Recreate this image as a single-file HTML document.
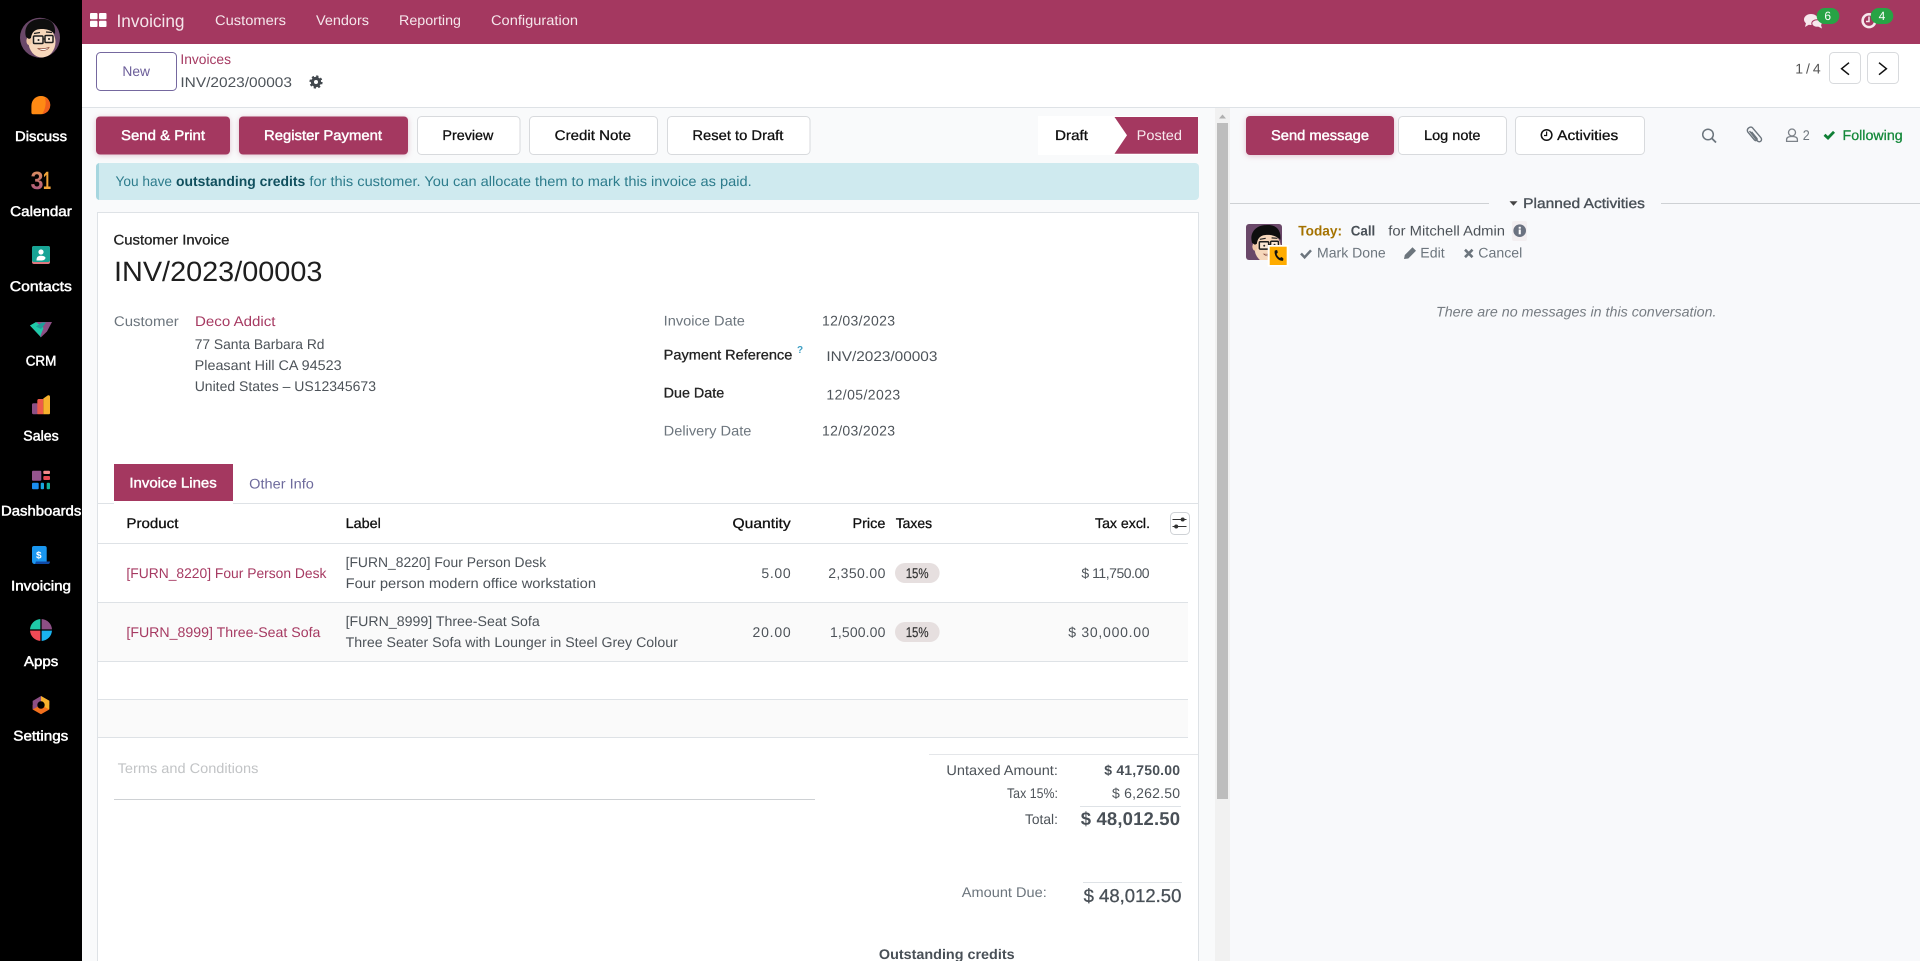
<!DOCTYPE html>
<html lang="en">
<head>
<meta charset="utf-8">
<title>INV/2023/00003 - Invoicing</title>
<style>
html,body{margin:0;padding:0;width:1920px;height:961px;overflow:hidden;background:#f9fafb}
svg{display:block;position:absolute;left:0;top:0}
text{font-family:"Liberation Sans",sans-serif;font-size:14px;text-rendering:geometricPrecision;white-space:pre}
.w{fill:#fff}
.wm{fill:#fff;stroke:#fff;stroke-width:.45}
.d{fill:#111}
.dm{fill:#111;stroke:#111;stroke-width:.3}
.g{fill:#4d5359}
.gl{fill:#6c757d}
.p{fill:#a63a62}
.sb{fill:#fff;stroke:#fff;stroke-width:.5}
.btn{fill:#fff;stroke:#d8dadd;stroke-width:1}
.pb{fill:#a43860;filter:drop-shadow(0 1px 3px rgba(164,56,96,.28))}
.ln{fill:#dee2e6}
</style>
</head>
<body>
<svg width="1920" height="961" viewBox="0 0 1920 961" xmlns="http://www.w3.org/2000/svg">
<defs>
<clipPath id="ac"><circle cx="40" cy="37.7" r="20"/></clipPath>
<clipPath id="as"><rect x="1246" y="224" width="36" height="36" rx="3"/></clipPath>
<linearGradient id="cal" x1="0" y1="0" x2="0" y2="1"><stop offset="0" stop-color="#e79a5a"/><stop offset="1" stop-color="#a04a86"/></linearGradient>
<g id="face">
<rect x="18" y="16" width="44" height="44" fill="#6a4869"/>
<ellipse cx="42" cy="42" rx="13.5" ry="15.5" fill="#f6d7bb"/>
<ellipse cx="29" cy="41" rx="2.6" ry="4" fill="#f0c9a8"/>
<path d="M26 37C23 26 31 19 40 19C50 18 56 23 55 34C51 30 46 29 42 29C36 29 32 31 31 38L29 39Z" fill="#0e0e0e"/>
<path d="M34 33.500l6-1M46 32l6 .5" stroke="#222" stroke-width="1.200" fill="none"/>
<rect x="33.500" y="36" width="9.500" height="7.500" rx="1" fill="#fff" fill-opacity=".35" stroke="#1c1c1c" stroke-width="1.500"/>
<rect x="45" y="35.500" width="8" height="7" rx="1" fill="#fff" fill-opacity=".35" stroke="#1c1c1c" stroke-width="1.500"/>
<path d="M43 39h2" stroke="#1c1c1c" stroke-width="1.300"/>
<circle cx="38.500" cy="40" r="1" fill="#222"/><circle cx="49" cy="39" r="1" fill="#222"/>
<path d="M38 48.500C41 51.500 47 51 49 47.500C46 48.500 42 49 38 48.500Z" fill="#fff" stroke="#8a4a3a" stroke-width=".7"/>
</g>
</defs>

<!-- sidebar -->
<rect x="0" y="0" width="82" height="961" fill="#000"/>
<g clip-path="url(#ac)"><use href="#face"/></g>

<path d="M31.400 106C31.400 100 35.500 96 41 96C46.500 96 50.200 100 50.200 105C50.200 110.500 46 114 41 114.300L33 114.300C31.900 114.300 31.400 113.500 31.400 112.500Z" fill="#ff8a14"/>
<path d="M45 97.500C48.500 99 50.200 102 50.200 105C50.200 110 46.500 113.500 42 114.200C45.500 109 46.500 103 45 97.500Z" fill="#f0601c"/>
<text x="15" y="141" class="sb" textLength="52" lengthAdjust="spacingAndGlyphs">Discuss</text>

<text x="30.500" y="189" style="font-size:25px;font-weight:700" fill="url(#cal)" textLength="13" lengthAdjust="spacingAndGlyphs">3</text>
<text x="43" y="189" style="font-size:25px;font-weight:700" fill="#f2a53a" textLength="8" lengthAdjust="spacingAndGlyphs">1</text>
<text x="10.200" y="216" class="sb" textLength="61.600" lengthAdjust="spacingAndGlyphs">Calendar</text>

<rect x="32" y="246" width="18" height="18" rx="2" fill="#e0787f"/>
<rect x="32" y="246" width="18" height="16" rx="2" fill="#17a495"/>
<circle cx="41" cy="252" r="2.600" fill="#fff"/>
<path d="M36.500 260.500C36.500 257 38 255.800 41 255.800C44 255.800 45.500 257 45.500 258C45 260 43 260.500 41 260.500Z" fill="#fff"/>
<text x="9.800" y="291" class="sb" textLength="62" lengthAdjust="spacingAndGlyphs">Contacts</text>

<path d="M30 325.500L37 322H52L47 331.500L41 337.300Z" fill="#8d4f85"/>
<path d="M30 325.500L36 322L43.500 328L40 337L41 337.300Z" fill="#1fc9a8"/>
<path d="M36 326.500L42 322.500H46L41 329Z" fill="#1e9f9a"/>
<text x="25.700" y="365.700" class="sb" textLength="30.600" lengthAdjust="spacingAndGlyphs">CRM</text>

<rect x="32" y="403.300" width="6" height="11" rx="1.500" fill="#8d4f85"/>
<path d="M37.300 414.300V400.500Q37.300 399.300 38.500 399H43.300V414.300Z" fill="#ee5a4a"/>
<path d="M43.300 414.300V398.500L48 395.300Q50 395 50 397V413Q50 414.300 48.500 414.300Z" fill="#f7b12d"/>
<text x="23.300" y="440.700" class="sb" textLength="35.400" lengthAdjust="spacingAndGlyphs">Sales</text>

<rect x="32" y="470.700" width="9.300" height="10" rx="1" fill="#95558f"/>
<rect x="43.300" y="470.700" width="6.700" height="3.300" rx="1" fill="#f58a8a"/>
<rect x="43.300" y="476" width="6.700" height="4" rx="1" fill="#e84a52"/>
<rect x="32" y="482.700" width="6.700" height="6.600" rx="1" fill="#1a8cf0"/>
<rect x="40.700" y="482.700" width="3.300" height="6.600" rx="1" fill="#17a7e0"/>
<rect x="46.700" y="482.700" width="3.300" height="6.600" rx="1" fill="#12b39a"/>
<text x="1" y="515.700" class="sb" textLength="80.300" lengthAdjust="spacingAndGlyphs">Dashboards</text>

<path d="M34 546H44.500Q46.700 546 46.700 548V564H35Q32 564 32 561V548Q32 546 34 546Z" fill="#1a97f0"/>
<path d="M36 561.500H50Q50 564 48 564H35Z" fill="#0f4aa8"/>
<text x="36" y="558.500" style="font-size:10px;font-weight:700" fill="#fff">$</text>
<text x="11" y="590.700" class="sb" textLength="60" lengthAdjust="spacingAndGlyphs">Invoicing</text>

<path d="M41 630V619A11 11 0 0 0 30 630Z" fill="#1fc9a8"/>
<path d="M41 630V619A11 11 0 0 1 52 630Z" fill="#8d4f85"/>
<path d="M41 630H30A11 11 0 0 0 41 641Z" fill="#f04a55"/>
<path d="M41 630H52A11 11 0 0 1 41 641Z" fill="#1ab3f0"/>
<path d="M41 618.500V641.500M29.500 630H52.500" stroke="#000" stroke-width="1.300"/>
<text x="24" y="666" class="sb" textLength="34.300" lengthAdjust="spacingAndGlyphs">Apps</text>

<path d="M41 696L49.300 700.700V705H33V700.700Z" fill="#8d4f85"/>
<path d="M41 696L49.300 700.700V709.300L45 711L41 705Z" fill="#f7b12d"/>
<path d="M32.700 709.500L41 714.300L49.300 709.500L41 705L32.700 705Z" fill="#f2701d"/>
<path d="M32.700 700.700V709.500L38 706.500V703Z" fill="#8d4f85"/>
<circle cx="41" cy="705" r="3.700" fill="#000"/>
<text x="13.300" y="740.700" class="sb" textLength="55" lengthAdjust="spacingAndGlyphs">Settings</text>

<!-- navbar -->
<rect x="82" y="0" width="1838" height="44" fill="#a43860"/>
<rect x="90" y="13" width="7.500" height="6.300" rx="1" fill="#fff"/><rect x="99" y="13" width="7.500" height="6.300" rx="1" fill="#fff"/>
<rect x="90" y="20.700" width="7.500" height="6.300" rx="1" fill="#fff"/><rect x="99" y="20.700" width="7.500" height="6.300" rx="1" fill="#fff"/>
<text x="116.500" y="27" style="font-size:18px" fill="#f5e6eb" textLength="68" lengthAdjust="spacingAndGlyphs">Invoicing</text>
<text x="215" y="25" fill="#f5e6eb" textLength="71" lengthAdjust="spacingAndGlyphs">Customers</text>
<text x="316" y="25" fill="#f5e6eb" textLength="53" lengthAdjust="spacingAndGlyphs">Vendors</text>
<text x="399" y="25" fill="#f5e6eb" textLength="62" lengthAdjust="spacingAndGlyphs">Reporting</text>
<text x="491" y="25" fill="#f5e6eb" textLength="87" lengthAdjust="spacingAndGlyphs">Configuration</text>

<ellipse cx="1811" cy="19.500" rx="7" ry="5.500" fill="#f7e8ed"/>
<path d="M1806 23L1805 27L1810 24Z" fill="#f7e8ed"/>
<ellipse cx="1817" cy="23.500" rx="5.200" ry="3.800" fill="#f7e8ed" stroke="#a43860" stroke-width="1"/>
<path d="M1818 26.500L1822 28.500L1821 25Z" fill="#f7e8ed"/>
<rect x="1816.700" y="8" width="22.600" height="16" rx="8" fill="#28a345"/>
<text x="1827.700" y="20" text-anchor="middle" style="font-size:12px" fill="#fff">6</text>
<circle cx="1869" cy="20.700" r="6.400" fill="none" stroke="#f7e8ed" stroke-width="2.500"/>
<path d="M1869 16.500V21.500H1866" fill="none" stroke="#f7e8ed" stroke-width="1.500"/>
<rect x="1870.700" y="8" width="22.600" height="16" rx="8" fill="#28a345"/>
<text x="1882" y="20" text-anchor="middle" style="font-size:12px" fill="#fff">4</text>

<!-- control panel -->
<rect x="82" y="44" width="1838" height="63" fill="#fff"/>
<rect x="82" y="107" width="1838" height="1" fill="#dee2e6"/>
<rect x="96.500" y="52.500" width="80" height="38" rx="4" fill="#fff" stroke="#75689f" stroke-width="1"/>
<text x="122.400" y="76" fill="#6b5d99" textLength="27.600" lengthAdjust="spacingAndGlyphs">New</text>
<text x="180.400" y="64" class="p" textLength="50.600" lengthAdjust="spacingAndGlyphs">Invoices</text>
<text x="180.400" y="87" class="g" textLength="111.600" lengthAdjust="spacingAndGlyphs">INV/2023/00003</text>
<circle cx="316" cy="82" r="3.600" fill="none" stroke="#41474d" stroke-width="3.200"/>
<circle cx="316" cy="82" r="5.600" fill="none" stroke="#41474d" stroke-width="2" stroke-dasharray="2.200 2.200"/>

<text x="1795.300" y="73.300" fill="#555" textLength="25.400" lengthAdjust="spacing">1 / 4</text>
<rect x="1829.500" y="52.500" width="31" height="31" rx="4" class="btn"/>
<rect x="1867.500" y="52.500" width="31" height="31" rx="4" class="btn"/>
<path d="M1849 62.700L1841.600 68.700L1849 74.700" fill="none" stroke="#111" stroke-width="1.500"/>
<path d="M1879 62.700L1886.400 68.700L1879 74.700" fill="none" stroke="#111" stroke-width="1.500"/>

<!-- action buttons -->
<rect x="96" y="116.500" width="134" height="38" rx="4" class="pb"/>
<text x="121" y="140" class="wm" textLength="84" lengthAdjust="spacingAndGlyphs">Send &amp; Print</text>
<rect x="239" y="116.500" width="169" height="38" rx="4" class="pb"/>
<text x="264" y="140" class="wm" textLength="118" lengthAdjust="spacingAndGlyphs">Register Payment</text>
<rect x="417.500" y="116.500" width="102.500" height="38" rx="4" class="btn"/>
<text x="442.400" y="140" class="dm" textLength="51" lengthAdjust="spacingAndGlyphs">Preview</text>
<rect x="529.500" y="116.500" width="128" height="38" rx="4" class="btn"/>
<text x="554.700" y="140" class="dm" textLength="76.300" lengthAdjust="spacingAndGlyphs">Credit Note</text>
<rect x="667.500" y="116.500" width="142.500" height="38" rx="4" class="btn"/>
<text x="692.400" y="140" class="dm" textLength="91" lengthAdjust="spacingAndGlyphs">Reset to Draft</text>

<!-- status bar -->
<rect x="1038" y="116" width="160" height="39" fill="#fff"/>
<path d="M1114.500 117H1198V153.700H1114.500L1127 135.300Z" fill="#a43860"/>
<text x="1055" y="140" class="dm" textLength="33" lengthAdjust="spacingAndGlyphs">Draft</text>
<text x="1136.700" y="140" fill="#f7e8ed" textLength="45.300" lengthAdjust="spacingAndGlyphs">Posted</text>

<!-- alert -->
<rect x="96" y="163" width="1103" height="37" rx="4" fill="#cfeaef"/>
<path d="M100 163H99V200H100C97.500 200 96 198.500 96 196V167C96 164.500 97.500 163 100 163Z" fill="#a6d6df"/>
<text x="115.500" y="186" fill="#2d7c8c" textLength="56.500" lengthAdjust="spacingAndGlyphs">You have</text>
<text x="176" y="186" style="font-weight:700" fill="#11505e" textLength="129.300" lengthAdjust="spacingAndGlyphs">outstanding credits</text>
<text x="309.400" y="186" fill="#2d7c8c" textLength="442.300" lengthAdjust="spacingAndGlyphs">for this customer. You can allocate them to mark this invoice as paid.</text>

<!-- sheet -->
<rect x="97.500" y="212.500" width="1101" height="760" fill="#fff" stroke="#dee2e6"/>
<text x="113.500" y="244.300" fill="#222" stroke="#222" stroke-width=".3" textLength="115.900" lengthAdjust="spacingAndGlyphs">Customer Invoice</text>
<text x="114" y="281" style="font-size:28px" fill="#1e1e1e" textLength="208.400" lengthAdjust="spacingAndGlyphs">INV/2023/00003</text>

<text x="113.900" y="326" class="gl" textLength="64.900" lengthAdjust="spacingAndGlyphs">Customer</text>
<text x="195" y="326" class="p" textLength="80.500" lengthAdjust="spacingAndGlyphs">Deco Addict</text>
<text x="194.700" y="349" class="g" textLength="129.800" lengthAdjust="spacingAndGlyphs">77 Santa Barbara Rd</text>
<text x="194.700" y="370" class="g" textLength="146.900" lengthAdjust="spacingAndGlyphs">Pleasant Hill CA 94523</text>
<text x="194.700" y="391" class="g" textLength="181.300" lengthAdjust="spacingAndGlyphs">United States – US12345673</text>

<text x="663.700" y="325.300" class="gl" textLength="81.200" lengthAdjust="spacingAndGlyphs">Invoice Date</text>
<text x="822" y="325.300" class="g" textLength="73" lengthAdjust="spacing">12/03/2023</text>
<text x="663.700" y="359.300" fill="#222" stroke="#222" stroke-width=".3" textLength="128.600" lengthAdjust="spacingAndGlyphs">Payment Reference</text>
<text x="797" y="353" style="font-size:10px;font-weight:700" fill="#3d9fc4">?</text>
<text x="826.400" y="361" class="g" textLength="111" lengthAdjust="spacingAndGlyphs">INV/2023/00003</text>
<text x="663.700" y="397.300" fill="#222" stroke="#222" stroke-width=".3" textLength="60.500" lengthAdjust="spacingAndGlyphs">Due Date</text>
<text x="826.400" y="399.300" class="g" textLength="73.800" lengthAdjust="spacing">12/05/2023</text>
<text x="663.700" y="435.300" class="gl" textLength="87.700" lengthAdjust="spacingAndGlyphs">Delivery Date</text>
<text x="822" y="435.300" class="g" textLength="73" lengthAdjust="spacing">12/03/2023</text>

<!-- tabs -->
<rect x="98" y="503" width="1100" height="1" class="ln"/>
<rect x="114" y="503" width="119" height="1" fill="#fff"/>
<rect x="114" y="464" width="119" height="37" fill="#a43860"/>
<text x="129.400" y="487.300" class="wm" textLength="87.300" lengthAdjust="spacingAndGlyphs">Invoice Lines</text>
<text x="249.200" y="488.300" fill="#6d6a9c" textLength="64.700" lengthAdjust="spacingAndGlyphs">Other Info</text>

<!-- table -->
<rect x="98" y="602" width="1090" height="59" fill="#fafafa"/>
<rect x="98" y="699" width="1090" height="38" fill="#fafafa"/>
<rect x="98" y="543" width="1090" height="1" class="ln"/>
<rect x="98" y="602" width="1090" height="1" class="ln"/>
<rect x="98" y="661" width="1090" height="1" class="ln"/>
<rect x="98" y="699" width="1090" height="1" class="ln"/>
<rect x="98" y="737" width="1090" height="1" class="ln"/>

<text x="126.400" y="528" class="dm" textLength="52" lengthAdjust="spacingAndGlyphs">Product</text>
<text x="345.600" y="528" class="dm" textLength="35.300" lengthAdjust="spacingAndGlyphs">Label</text>
<text x="732.500" y="528" class="dm" textLength="58.200" lengthAdjust="spacingAndGlyphs">Quantity</text>
<text x="852.500" y="528" class="dm" textLength="32.900" lengthAdjust="spacingAndGlyphs">Price</text>
<text x="895.700" y="528" class="dm" textLength="36.400" lengthAdjust="spacingAndGlyphs">Taxes</text>
<text x="1095" y="528" class="dm" textLength="55" lengthAdjust="spacingAndGlyphs">Tax excl.</text>
<rect x="1170.500" y="512.500" width="19" height="22" rx="4" fill="#fff" stroke="#cfd2d6"/>
<path d="M1172.500 519.500H1186.500M1172.500 526.500H1186.500" stroke="#333" stroke-width="1"/>
<circle cx="1182.700" cy="519.500" r="2" fill="#333"/><circle cx="1176.200" cy="526.500" r="2" fill="#333"/>

<text x="126.400" y="578" class="p" textLength="200.100" lengthAdjust="spacingAndGlyphs">[FURN_8220] Four Person Desk</text>
<text x="345.600" y="567" class="g" textLength="200.600" lengthAdjust="spacingAndGlyphs">[FURN_8220] Four Person Desk</text>
<text x="345.600" y="588" class="g" textLength="250.400" lengthAdjust="spacingAndGlyphs">Four person modern office workstation</text>
<text x="761.400" y="578" class="g" textLength="29.300" lengthAdjust="spacing">5.00</text>
<text x="828.200" y="578" class="g" textLength="57.200" lengthAdjust="spacing">2,350.00</text>
<rect x="895" y="563" width="44.600" height="20" rx="10" fill="#e6dfdf"/>
<text x="905.700" y="578" fill="#333" stroke="#333" stroke-width=".2" textLength="22.900" lengthAdjust="spacingAndGlyphs">15%</text>
<text x="1081.400" y="578" class="g" textLength="68.200" lengthAdjust="spacing">$ 11,750.00</text>

<text x="126.400" y="637" class="p" textLength="194" lengthAdjust="spacingAndGlyphs">[FURN_8999] Three-Seat Sofa</text>
<text x="345.600" y="626" class="g" textLength="194.100" lengthAdjust="spacingAndGlyphs">[FURN_8999] Three-Seat Sofa</text>
<text x="345.600" y="647" class="g" textLength="332.200" lengthAdjust="spacingAndGlyphs">Three Seater Sofa with Lounger in Steel Grey Colour</text>
<text x="752.500" y="637" class="g" textLength="38.200" lengthAdjust="spacing">20.00</text>
<text x="830" y="637" class="g" textLength="55.400" lengthAdjust="spacing">1,500.00</text>
<rect x="895" y="622" width="44.600" height="20" rx="10" fill="#e6dfdf"/>
<text x="905.700" y="637" fill="#333" stroke="#333" stroke-width=".2" textLength="22.900" lengthAdjust="spacingAndGlyphs">15%</text>
<text x="1068.200" y="637" class="g" textLength="81.400" lengthAdjust="spacing">$ 30,000.00</text>

<!-- terms -->
<text x="117.600" y="773" fill="#c2c4c6" textLength="140.800" lengthAdjust="spacingAndGlyphs">Terms and Conditions</text>
<rect x="114" y="799" width="701" height="1" fill="#ced1d4"/>

<!-- totals -->
<rect x="929" y="754" width="269" height="1" fill="#e4e6e9"/>
<text x="946.400" y="775" class="g" textLength="111.500" lengthAdjust="spacingAndGlyphs">Untaxed Amount:</text>
<text x="1104.300" y="775" style="font-weight:700" fill="#495057" textLength="75.700" lengthAdjust="spacing">$ 41,750.00</text>
<text x="1007" y="798" class="g" textLength="50.900" lengthAdjust="spacingAndGlyphs">Tax 15%:</text>
<text x="1112" y="798" class="g" textLength="68" lengthAdjust="spacing">$ 6,262.50</text>
<rect x="1080" y="806" width="101" height="1" fill="#dee2e6"/>
<text x="1025" y="824" class="g" textLength="32.900" lengthAdjust="spacingAndGlyphs">Total:</text>
<text x="1080.700" y="825" style="font-size:18.500px;font-weight:700" fill="#495057" textLength="99.300" lengthAdjust="spacing">$ 48,012.50</text>
<rect x="1083" y="882" width="99" height="1" fill="#dee2e6"/>
<text x="961.800" y="897" class="gl" textLength="85" lengthAdjust="spacingAndGlyphs">Amount Due:</text>
<text x="1083.600" y="902" style="font-size:18.500px" fill="#495057" stroke="#495057" stroke-width=".3" textLength="97.800" lengthAdjust="spacing">$ 48,012.50</text>
<text x="878.900" y="959" style="font-weight:700" fill="#495057" textLength="135.700" lengthAdjust="spacingAndGlyphs">Outstanding credits</text>

<!-- scrollbar -->
<rect x="1215" y="108" width="15" height="853" fill="#f1f1f1"/>
<rect x="1217" y="123" width="11" height="676" fill="#bdbdbd"/>
<path d="M1219 118.500H1226L1222.500 114.500Z" fill="#b0b0b0"/>

<!-- chatter -->
<rect x="1230" y="108" width="690" height="853" fill="#f8f9fb"/>
<rect x="1246" y="116" width="148" height="39" rx="4" class="pb"/>
<text x="1271" y="140" class="wm" textLength="98" lengthAdjust="spacingAndGlyphs">Send message</text>
<rect x="1398.500" y="116.500" width="108" height="38" rx="4" class="btn"/>
<text x="1424" y="140" class="dm" textLength="56.500" lengthAdjust="spacingAndGlyphs">Log note</text>
<rect x="1515.500" y="116.500" width="129" height="38" rx="4" class="btn"/>
<circle cx="1546.600" cy="135" r="5.300" fill="none" stroke="#111" stroke-width="1.500"/>
<path d="M1546.600 131.500V135.500H1544" fill="none" stroke="#111" stroke-width="1.200"/>
<text x="1557.200" y="140" class="dm" textLength="61.100" lengthAdjust="spacingAndGlyphs">Activities</text>

<circle cx="1708" cy="134.500" r="5.300" fill="none" stroke="#6c757d" stroke-width="1.500"/>
<path d="M1712 138.500L1716 142.500" stroke="#6c757d" stroke-width="1.800"/>
<path d="M1750.500 131L1758 140.500C1760.500 143.500 1764 140.500 1761.800 137.500L1753.500 127.800C1751.800 125.800 1747 128.500 1748.800 132L1755.500 140C1757 141.500 1758.800 139.800 1757.800 138.300L1752.500 131.800" transform="translate(-1 0)" fill="none" stroke="#6c757d" stroke-width="1.400"/>
<circle cx="1792" cy="132.500" r="3.500" fill="none" stroke="#7c8289" stroke-width="1.300"/>
<path d="M1786.600 141.400V139.500C1786.600 137.500 1788.500 136.500 1792 136.500C1795.500 136.500 1797.400 137.500 1797.400 139.500V141.400Z" fill="none" stroke="#7c8289" stroke-width="1.300"/>
<text x="1802.700" y="140" class="gl" textLength="7" lengthAdjust="spacingAndGlyphs">2</text>
<path d="M1824.500 134.800L1828 138L1834 131.800" fill="none" stroke="#0f7f35" stroke-width="2.800"/>
<text x="1842.500" y="140" fill="#15893b" stroke="#15893b" stroke-width=".3" textLength="60.200" lengthAdjust="spacingAndGlyphs">Following</text>

<rect x="1230" y="203" width="259" height="1" fill="#ced1d4"/>
<rect x="1661" y="203" width="259" height="1" fill="#ced1d4"/>
<path d="M1509.500 201.300H1517.500L1513.500 205.800Z" fill="#444"/>
<text x="1523.200" y="208" fill="#495057" stroke="#495057" stroke-width=".35" textLength="121.700" lengthAdjust="spacingAndGlyphs">Planned Activities</text>

<g clip-path="url(#as)"><g transform="translate(1226.500 206.500) scale(.98)"><use href="#face"/></g></g>
<rect x="1267.700" y="245" width="21" height="21.700" fill="#fff"/>
<rect x="1269.700" y="246.700" width="17" height="18.300" fill="#ffac00"/>
<path d="M1274.800 250.500L1277 250C1277.500 251 1278 252.300 1277.500 253L1276.600 253.800C1277 255.600 1278.500 257.300 1280 258L1281 257.200C1281.700 257 1283 258 1283.500 258.800L1283 260.700C1278.500 261.500 1273.500 255.500 1274.800 250.500Z" fill="#111"/>

<text x="1298.300" y="235.700" style="font-weight:700" fill="#a47200" textLength="43.700" lengthAdjust="spacingAndGlyphs">Today:</text>
<text x="1350.700" y="235.700" style="font-weight:700" fill="#495057" textLength="24.600" lengthAdjust="spacingAndGlyphs">Call</text>
<text x="1388.300" y="235.700" class="g" textLength="116.700" lengthAdjust="spacingAndGlyphs">for Mitchell Admin</text>
<rect x="1512" y="221" width="15" height="20" rx="2" fill="#f3eff1"/>
<circle cx="1519.700" cy="230.700" r="6.300" fill="#6b7280"/>
<rect x="1518.700" y="229.500" width="2.100" height="4.800" fill="#fff"/><rect x="1518.700" y="226.800" width="2.100" height="1.900" fill="#fff"/>

<path d="M1301 253.500L1304.600 257.300L1311 250.300" fill="none" stroke="#6c757d" stroke-width="2.500"/>
<text x="1317" y="257.600" class="gl" textLength="68.700" lengthAdjust="spacingAndGlyphs">Mark Done</text>
<path d="M1404 259L1404.800 255L1412.500 247.300L1416 250.800L1408.300 258.500Z" fill="#6c757d"/>
<text x="1420.300" y="257.600" class="gl" textLength="24.400" lengthAdjust="spacingAndGlyphs">Edit</text>
<path d="M1465 249.700L1472.500 257.200M1472.500 249.700L1465 257.200" stroke="#6c757d" stroke-width="2.600"/>
<text x="1478.300" y="257.600" class="gl" textLength="44" lengthAdjust="spacingAndGlyphs">Cancel</text>

<text x="1436" y="316.700" style="font-style:italic" fill="#767c82" textLength="280.500" lengthAdjust="spacingAndGlyphs">There are no messages in this conversation.</text>
</svg>
</body>
</html>
